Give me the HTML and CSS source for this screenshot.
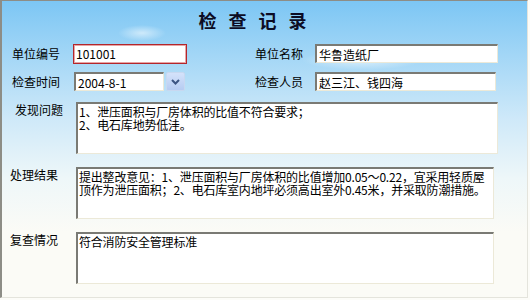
FILE: index.html
```html
<!DOCTYPE html>
<html lang="zh-CN">
<head>
  <meta charset="UTF-8">
  <title>检查记录</title>
  <link rel="stylesheet" href="styles.css">
</head>
<body>
  <div class="window">
    <h1 class="title">检查记录</h1>

    <div class="fields">
      <label class="lbl">单位编号</label>
      <div class="cell"><input class="box box-active" type="text" value="101001"></div>
      <label class="lbl">单位名称</label>
      <div class="cell"><input class="box box-wide" type="text" value="华鲁造纸厂"></div>

      <label class="lbl">检查时间</label>
      <div class="cell date-cell">
        <input class="box box-date" type="text" value="2004-8-1">
        <span class="drop">
          <svg width="9" height="6" viewBox="0 0 9 6"><path d="M1 1 L4.5 4.5 L8 1" fill="none" stroke="#3c5482" stroke-width="2"/></svg>
        </span>
      </div>
      <label class="lbl">检查人员</label>
      <div class="cell"><input class="box box-wide box-short" type="text" value="赵三江、钱四海"></div>
    </div>

    <div class="memo memo-first">
      <label class="lbl memo-lbl">发现问题</label>
      <textarea class="memo-text">1、泄压面积与厂房体积的比值不符合要求；
2、电石库地势低洼。</textarea>
    </div>

    <div class="memo">
      <label class="lbl memo-lbl">处理结果</label>
      <textarea class="memo-text memo-narrow">提出整改意见：1、泄压面积与厂房体积的比值增加0.05～0.22，宜采用轻质屋顶作为泄压面积；2、电石库室内地坪必须高出室外0.45米，并采取防潮措施。</textarea>
    </div>

    <div class="memo">
      <label class="lbl memo-lbl">复查情况</label>
      <textarea class="memo-text memo-narrow">符合消防安全管理标准</textarea>
    </div>
  </div>
</body>
</html>
```

FILE: styles.css
```css
body {
    margin: 0;
    background-color: #fcfcf8;
    font-family: "Noto Sans CJK SC", "DejaVu Sans", sans-serif;
    font-size: 12px;
    color: #000;
}

.window {
    width: 528px;
    height: 298px;
    box-sizing: border-box;
    border-left: 2px solid #8d8d86;
    border-top: 1px solid #8d8d86;
    border-right: 1px solid #e4e4dc;
    border-bottom: 1px solid #e4e4dc;
    background:
        radial-gradient(ellipse 24px 8px at 140px 32px, rgba(255,255,255,0.55), rgba(255,255,255,0)),
        radial-gradient(ellipse 60px 10px at 360px 59px, rgba(255,255,255,0.6), rgba(255,255,255,0)),
        linear-gradient(to bottom, #7cc6f4 0%, #a2d6f6 18%, #cfe9f9 40%, #eef7f9 60%, #fbfbf6 78%, #fbfbf6 100%);
}

.title {
    margin: 0;
    height: 40px;
    padding-top: 7px;
    padding-right: 12px;
    box-sizing: border-box;
    text-align: center;
    font-size: 18px;
    line-height: 24px;
    font-weight: bold;
    letter-spacing: 12px;
    color: #0c0c24;
}

.fields {
    display: grid;
    grid-template-columns: 61px 182px 60px 183px;
    grid-auto-rows: 21px;
    row-gap: 7px;
    padding-left: 10px;
    padding-top: 2px;
}

.lbl {
    line-height: 21px;
    white-space: nowrap;
}

.cell {
    display: flex;
    align-items: center;
}

.box {
    height: 20px;
    box-sizing: border-box;
    padding: 0 2px;
    font-family: "Noto Sans CJK SC", "DejaVu Sans", sans-serif;
    font-size: 12px;
    background-color: #fff;
    border-top: 2px solid #7a7a74;
    border-left: 2px solid #7a7a74;
    border-right: 1px solid #ece9d8;
    border-bottom: 1px solid #ece9d8;
    outline: none;
}

.box-active {
    width: 114px;
    border: 1px solid #b3262c;
    box-shadow: inset 0 0 0 1px #e8a4a4;
}

.box-wide {
    width: 183px;
    height: 19px;
}

.box-short {
    width: 181px;
}

.box-date {
    width: 90px;
    height: 19px;
}

.date-cell {
    gap: 2px;
    padding-left: 1px;
}

.drop {
    width: 19px;
    height: 19px;
    box-sizing: border-box;
    display: flex;
    align-items: center;
    justify-content: center;
    border: 1px solid #c8d8f0;
    border-radius: 2px;
    background: linear-gradient(to bottom, #d4e2fa, #b6ccf2);
}

.memo {
    display: flex;
    margin-top: 13px;
}

.memo-first {
    margin-top: 10px;
}

.memo-lbl {
    width: 74px;
    flex-shrink: 0;
    padding-left: 8px;
    box-sizing: border-box;
    line-height: 16px;
}

.memo-first .memo-lbl {
    padding-left: 13px;
}

.memo-text {
    width: 422px;
    height: 52px;
    box-sizing: border-box;
    margin: 0;
    padding: 1px 0 1px 1px;
    resize: none;
    overflow: hidden;
    font-family: "Noto Sans CJK SC", "DejaVu Sans", sans-serif;
    font-size: 12px;
    line-height: 13px;
    letter-spacing: -0.2px;
    background-color: #fff;
    border-top: 2px solid #7a7a74;
    border-left: 2px solid #7a7a74;
    border-right: 1px solid #ece9d8;
    border-bottom: 1px solid #ece9d8;
    outline: none;
}

.memo-narrow {
    width: 418px;
}
```
